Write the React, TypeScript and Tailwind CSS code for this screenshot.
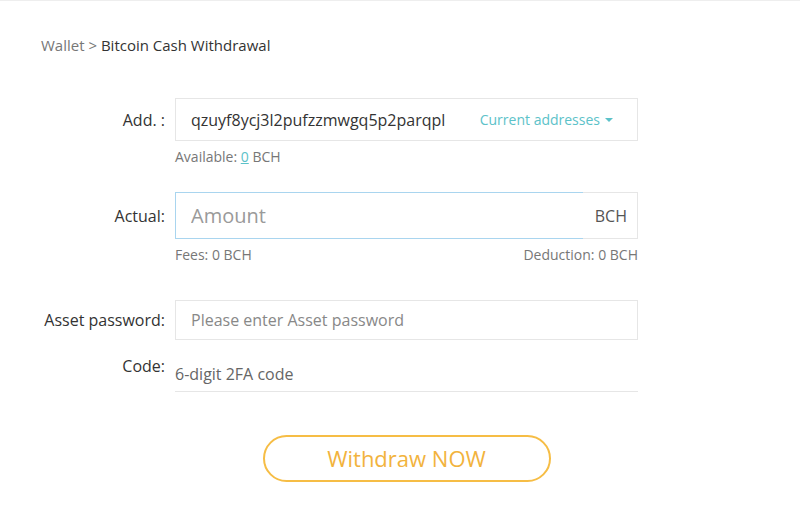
import { useState } from 'react';

const font = { fontFamily: '"Open Sans", "Noto Sans", sans-serif' };

function Label({ children, className = '' }: { children: React.ReactNode; className?: string }) {
  return <div className={`w-[165px] shrink-0 text-right text-[16px] text-[#333] ${className}`}>{children}</div>;
}

export default function App() {
  const [amount, setAmount] = useState('');
  const [password, setPassword] = useState('');
  const [code, setCode] = useState('');

  return (
    <div className="min-h-screen w-full border-t border-[#eeeeee] bg-white" style={font}>
      <div className="pl-[41px] pt-[34px] text-[15px] leading-5">
        <span className="text-[#777]">Wallet &gt; </span>
        <span className="text-[#333]">Bitcoin Cash Withdrawal</span>
      </div>

      {/* address */}
      <div className="mt-[43px] flex items-center gap-[10px]">
        <Label className="leading-5">Add. :</Label>
        <div className="flex h-[43px] w-[463px] items-center justify-between border border-[#e6e6e6] pl-[15px] pr-[24px]">
          <span className="text-[16px] text-[#333]">qzuyf8ycj3l2pufzzmwgq5p2parqpl</span>
          <button className="flex items-center gap-[5px] text-[14px] text-[#5cc2c9]">
            Current addresses
            <span className="mt-[1px] h-0 w-0 border-x-[4px] border-t-[4px] border-x-transparent border-t-[#5cc2c9]" />
          </button>
        </div>
      </div>
      <div className="mt-[7px] pl-[175px] text-[14px] leading-[18px] text-[#777]">
        Available: <span className="text-[#5cc2c9] underline">0</span> BCH
      </div>

      {/* amount */}
      <div className="mt-[26px] flex items-center gap-[10px]">
        <Label className="leading-5">Actual:</Label>
        <div className="flex h-[47px] w-[463px]">
          <input
            value={amount}
            onChange={(e) => setAmount(e.target.value)}
            placeholder="Amount"
            className="h-full w-[408px] border border-r-0 border-[#a9d5ef] pl-[15px] text-[20px] text-[#333] outline-none placeholder:text-[#9a9a9a]"
          />
          <div className="flex flex-1 items-center justify-end border-y border-r border-[#e6e6e6] pr-[10px] text-[16px] text-[#555]">
            BCH
          </div>
        </div>
      </div>
      <div className="mt-[7px] flex w-[638px] justify-between pl-[175px] text-[14px] leading-[18px] text-[#777]">
        <span>Fees: 0 BCH</span>
        <span>Deduction: 0 BCH</span>
      </div>

      {/* password */}
      <div className="mt-[36px] flex items-center gap-[10px]">
        <Label className="leading-5">Asset password:</Label>
        <input
          type="password"
          value={password}
          onChange={(e) => setPassword(e.target.value)}
          placeholder="Please enter Asset password"
          className="h-[40px] w-[463px] border border-[#e6e6e6] pl-[15px] text-[16px] text-[#333] outline-none placeholder:text-[#888]"
        />
      </div>

      {/* code */}
      <div className="mt-[12px] flex items-start gap-[10px]">
        <Label className="pt-[4px] leading-5">Code:</Label>
        <input
          value={code}
          onChange={(e) => setCode(e.target.value)}
          placeholder="6-digit 2FA code"
          className="h-[40px] w-[463px] border-b border-[#e6e6e6] pt-[4px] text-[16px] text-[#333] outline-none placeholder:text-[#666]"
        />
      </div>

      <div className="mt-[43px] flex w-[638px] justify-center pl-[175px]">
        <button className="h-[47px] w-[288px] rounded-full border-2 border-[#f6bd45] text-[22px] text-[#f2b33d]">
          Withdraw NOW
        </button>
      </div>
    </div>
  );
}
